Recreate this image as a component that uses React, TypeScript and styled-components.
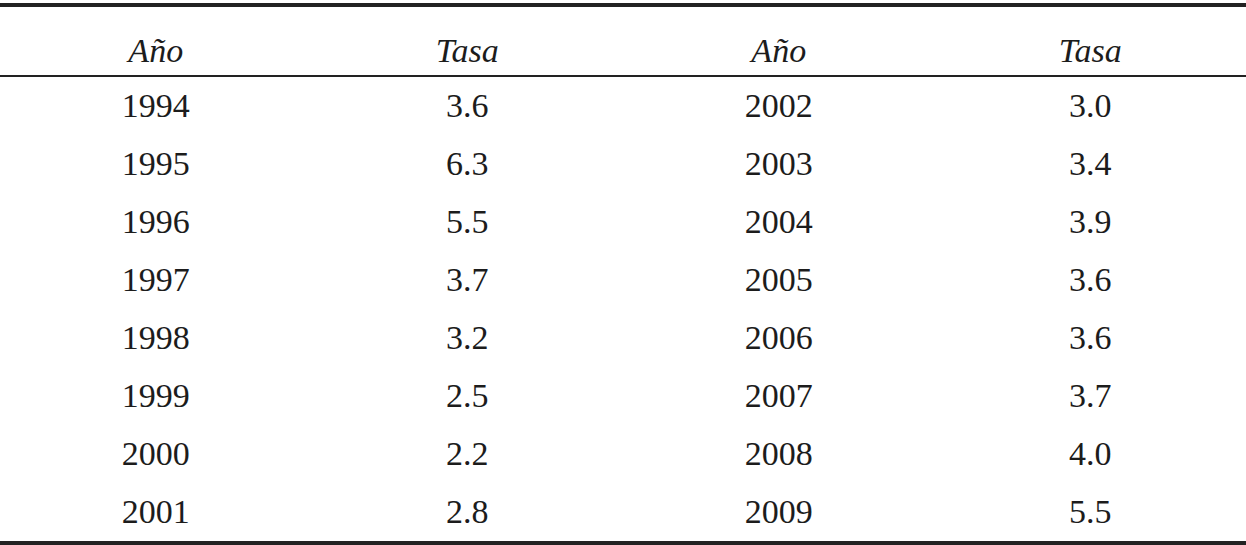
import React from "react";
import styled, { createGlobalStyle } from "styled-components";

const Global = createGlobalStyle`
  html, body { margin: 0; padding: 0; background: #ffffff; }
  body { font-family: "Liberation Serif", "Times New Roman", serif; color: #1c1c1c; }
`;

const Page = styled.div`
  width: 1246px;
  height: 545px;
  padding-top: 3px;
  box-sizing: border-box;
  overflow: hidden;
`;

const Table = styled.table`
  width: 1246px;
  border-collapse: collapse;
  table-layout: fixed;
  border-top: 4px solid #222;
  border-bottom: 4px solid #222;
`;

const HeadCell = styled.th`
  font-weight: normal;
  font-style: italic;
  font-size: 34px;
  line-height: 49px;
  padding: 19px 0 0;
  height: 68px;
  box-sizing: border-box;
  text-align: center;
  border-bottom: 2px solid #222;
  vertical-align: top;
`;

const Cell = styled.td<{ $shift?: number }>`
  font-size: 34px;
  line-height: 58px;
  height: 58px;
  padding: 0;
  text-align: center;
  vertical-align: top;
`;

const left: [string, string][] = [
  ["1994", "3.6"],
  ["1995", "6.3"],
  ["1996", "5.5"],
  ["1997", "3.7"],
  ["1998", "3.2"],
  ["1999", "2.5"],
  ["2000", "2.2"],
  ["2001", "2.8"],
];
const right: [string, string][] = [
  ["2002", "3.0"],
  ["2003", "3.4"],
  ["2004", "3.9"],
  ["2005", "3.6"],
  ["2006", "3.6"],
  ["2007", "3.7"],
  ["2008", "4.0"],
  ["2009", "5.5"],
];

export default function App() {
  return (
    <Page>
      <Global />
      <Table>
        <thead>
          <tr>
            <HeadCell>Año</HeadCell>
            <HeadCell>Tasa</HeadCell>
            <HeadCell>Año</HeadCell>
            <HeadCell>Tasa</HeadCell>
          </tr>
        </thead>
        <tbody>
          {left.map((l, i) => (
            <tr key={l[0]}>
              <Cell>{l[0]}</Cell>
              <Cell>{l[1]}</Cell>
              <Cell>{right[i][0]}</Cell>
              <Cell>{right[i][1]}</Cell>
            </tr>
          ))}
        </tbody>
      </Table>
    </Page>
  );
}
